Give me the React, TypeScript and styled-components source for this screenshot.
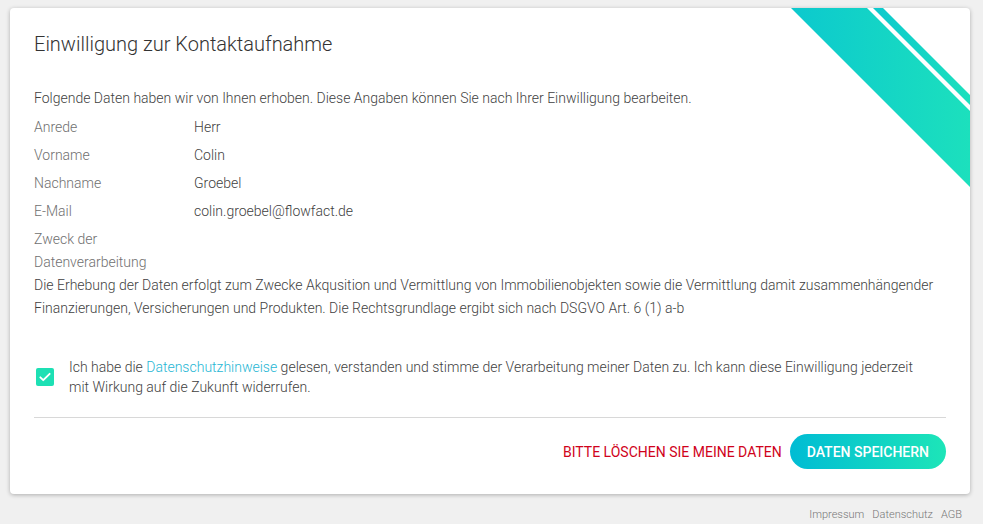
import React, { useState } from 'react'
import styled, { createGlobalStyle } from 'styled-components'

const GlobalStyle = createGlobalStyle`
  html, body {
    margin: 0;
    padding: 0;
    background: #f0f0f0;
    font-family: Roboto, "Liberation Sans", Arial, sans-serif;
  }
`

const Page = styled.div`
  padding: 8px 13px 0 10px;
  min-height: 100vh;
  box-sizing: border-box;
`

const Card = styled.div`
  position: relative;
  overflow: hidden;
  background: #fff;
  border-radius: 4px;
  box-shadow: 0 1px 4px rgba(0, 0, 0, 0.28);
  padding: 24px 24px 25px 24px;
  color: #3f3f3f;
  font-size: 14px;
  font-weight: 300;
`

const Corner = styled.svg`
  position: absolute;
  top: 0;
  right: 0;
  pointer-events: none;
`

const Title = styled.h1`
  margin: 0;
  font-size: 20px;
  line-height: 24px;
  font-weight: 300;
  color: #333;
`

const Intro = styled.p`
  margin: 31px 0 6px;
  line-height: 23px;
`

const Rows = styled.div`
  display: flex;
  flex-direction: column;
  gap: 5px;
`

const Row = styled.div`
  display: grid;
  grid-template-columns: 160px 1fr;
  line-height: 23px;
`

const Label = styled.div`
  color: #707070;
`

const Value = styled.div`
  color: #3f3f3f;
`

const Description = styled.p`
  margin: 0;
  line-height: 23px;
`

const Consent = styled.label`
  display: flex;
  align-items: center;
  gap: 15px;
  margin: 37px 0 0 2px;
  padding-right: 30px;
  line-height: 20px;
  cursor: pointer;
`

const Box = styled.span<{ $checked: boolean }>`
  flex: 0 0 18px;
  width: 18px;
  height: 18px;
  border-radius: 2px;
  background: ${p => (p.$checked ? '#1de0b4' : '#fff')};
  border: ${p => (p.$checked ? 'none' : '2px solid #999')};
  box-sizing: border-box;
  display: flex;
  align-items: center;
  justify-content: center;
`

const Link = styled.a`
  color: #26b6d4;
  text-decoration: none;
`

const Divider = styled.hr`
  border: none;
  border-top: 1px solid #d8d8d8;
  margin: 20px 0 16px;
`

const Actions = styled.div`
  display: flex;
  justify-content: flex-end;
  align-items: center;
  gap: 8px;
`

const TextButton = styled.button`
  background: none;
  border: none;
  padding: 0;
  font: inherit;
  font-size: 14px;
  font-weight: 400;
  color: #d0021b;
  text-transform: uppercase;
  cursor: pointer;
`

const PrimaryButton = styled.button`
  height: 35px;
  padding: 0 17px;
  border: none;
  border-radius: 18px;
  background: linear-gradient(90deg, #00bcd4 0%, #1de5b8 100%);
  color: #fff;
  font: inherit;
  font-size: 14px;
  font-weight: 500;
  text-transform: uppercase;
  cursor: pointer;
`

const Footer = styled.div`
  display: flex;
  justify-content: flex-end;
  gap: 8px;
  padding: 14px 8px 0 0;
  font-size: 11px;
  font-weight: 300;
  color: #777;

  a {
    color: inherit;
    text-decoration: none;
  }
`

const data = [
  ['Anrede', 'Herr'],
  ['Vorname', 'Colin'],
  ['Nachname', 'Groebel'],
  ['E-Mail', 'colin.groebel@flowfact.de'],
]

export default function App() {
  const [checked, setChecked] = useState(true)

  return (
    <Page>
      <GlobalStyle />
      <Card>
        <Corner width="180" height="180" viewBox="0 0 180 180">
          <defs>
            <linearGradient id="stripe" x1="0" y1="0" x2="1" y2="0">
              <stop offset="0" stopColor="#0cc9ce" />
              <stop offset="1" stopColor="#1ce0bd" />
            </linearGradient>
          </defs>
          <polygon points="1,0 77,0 180,103 180,179" fill="url(#stripe)" />
          <polygon points="83,0 93,0 180,87 180,97" fill="url(#stripe)" />
        </Corner>

        <Title>Einwilligung zur Kontaktaufnahme</Title>
        <Intro>
          Folgende Daten haben wir von Ihnen erhoben. Diese Angaben können Sie nach Ihrer Einwilligung bearbeiten.
        </Intro>
        <Rows>
          {data.map(([label, value]) => (
            <Row key={label}>
              <Label>{label}</Label>
              <Value>{value}</Value>
            </Row>
          ))}
          <Row>
            <Label>Zweck der Datenverarbeitung</Label>
            <Value />
          </Row>
        </Rows>
        <Description>
          Die Erhebung der Daten erfolgt zum Zwecke Akqusition und Vermittlung von Immobilienobjekten sowie die
          Vermittlung damit zusammenhängender Finanzierungen, Versicherungen und Produkten. Die Rechtsgrundlage ergibt
          sich nach DSGVO Art. 6 (1) a-b
        </Description>

        <Consent onClick={() => setChecked(!checked)}>
          <Box $checked={checked}>
            {checked && (
              <svg width="14" height="14" viewBox="0 0 24 24">
                <path d="M4 12.5l5 5L20 6.5" fill="none" stroke="#fff" strokeWidth="3.2" strokeLinecap="round" strokeLinejoin="round" />
              </svg>
            )}
          </Box>
          <span>
            Ich habe die <Link href="#" onClick={e => e.stopPropagation()}>Datenschutzhinweise</Link> gelesen,
            verstanden und stimme der Verarbeitung meiner Daten zu. Ich kann diese Einwilligung jederzeit mit Wirkung
            auf die Zukunft widerrufen.
          </span>
        </Consent>

        <Divider />

        <Actions>
          <TextButton>Bitte löschen Sie meine Daten</TextButton>
          <PrimaryButton>Daten speichern</PrimaryButton>
        </Actions>
      </Card>
      <Footer>
        <a href="#">Impressum</a>
        <a href="#">Datenschutz</a>
        <a href="#">AGB</a>
      </Footer>
    </Page>
  )
}
